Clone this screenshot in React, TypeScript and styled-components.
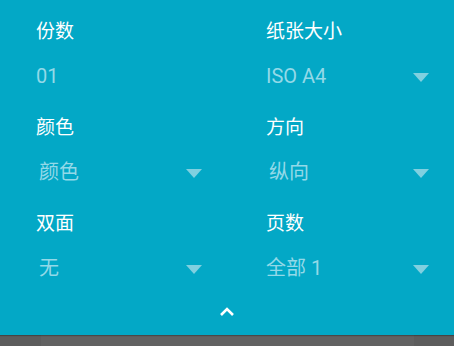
import React from 'react';
import styled, { createGlobalStyle } from 'styled-components';

const Global = createGlobalStyle`
  html, body {
    margin: 0;
    padding: 0;
    background: #5d5d5d;
    font-family: Roboto, "Noto Sans CJK SC", sans-serif;
    overflow: hidden;
  }
`;

const Screen = styled.div`
  width: 454px;
  height: 346px;
  display: flex;
  flex-direction: column;
`;

const Panel = styled.div`
  height: 335px;
  flex: none;
  background: #03a8c6;
  box-shadow: 0 1px 1px rgba(0, 0, 0, 0.25);
  position: relative;
  z-index: 1;
  display: flex;
  flex-direction: column;
`;

const Grid = styled.div`
  display: grid;
  grid-template-columns: 166px 163px;
  column-gap: 64px;
  row-gap: 28px;
  padding: 20px 25px 0 36px;
`;

const Field = styled.div`
  display: flex;
  flex-direction: column;
`;

const Label = styled.div`
  color: #ffffff;
  font-size: 19px;
  line-height: 24px;
  height: 24px;
`;

const ValueRow = styled.div<{ $indent?: boolean }>`
  margin-top: 20px;
  height: 24px;
  display: flex;
  align-items: center;
  justify-content: space-between;
  padding-left: ${p => (p.$indent ? '3px' : '0')};
  color: #93d9e8;
  font-size: 20px;
  line-height: 24px;
`;

const Arrow = styled.span`
  width: 0;
  height: 0;
  border-left: 8px solid transparent;
  border-right: 8px solid transparent;
  border-top: 9px solid #80d0e0;
  margin-top: 2px;
`;

const Toggle = styled.div`
  display: flex;
  justify-content: center;
  margin-top: 26px;
`;

const Backdrop = styled.div`
  flex: 1;
  display: flex;
  justify-content: center;
`;

const Sheet = styled.div`
  width: 373px;
  background: #626262;
`;

const fields: { label: string; value: string; drop: boolean; indent?: boolean }[] = [
  { label: '份数', value: '01', drop: false },
  { label: '纸张大小', value: 'ISO A4', drop: true },
  { label: '颜色', value: '颜色', drop: true, indent: true },
  { label: '方向', value: '纵向', drop: true, indent: true },
  { label: '双面', value: '无', drop: true, indent: true },
  { label: '页数', value: '全部 1', drop: true },
];

export default function App() {
  return (
    <Screen>
      <Global />
      <Panel>
        <Grid>
          {fields.map(f => (
            <Field key={f.label}>
              <Label>{f.label}</Label>
              <ValueRow $indent={f.indent}>
                <span>{f.value}</span>
                {f.drop && <Arrow />}
              </ValueRow>
            </Field>
          ))}
        </Grid>
        <Toggle>
          <svg width="16" height="10" viewBox="0 0 16 10">
            <path d="M2 9 L8 3 L14 9" fill="none" stroke="#ffffff" strokeWidth="2.6" />
          </svg>
        </Toggle>
      </Panel>
      <Backdrop>
        <Sheet />
      </Backdrop>
    </Screen>
  );
}
